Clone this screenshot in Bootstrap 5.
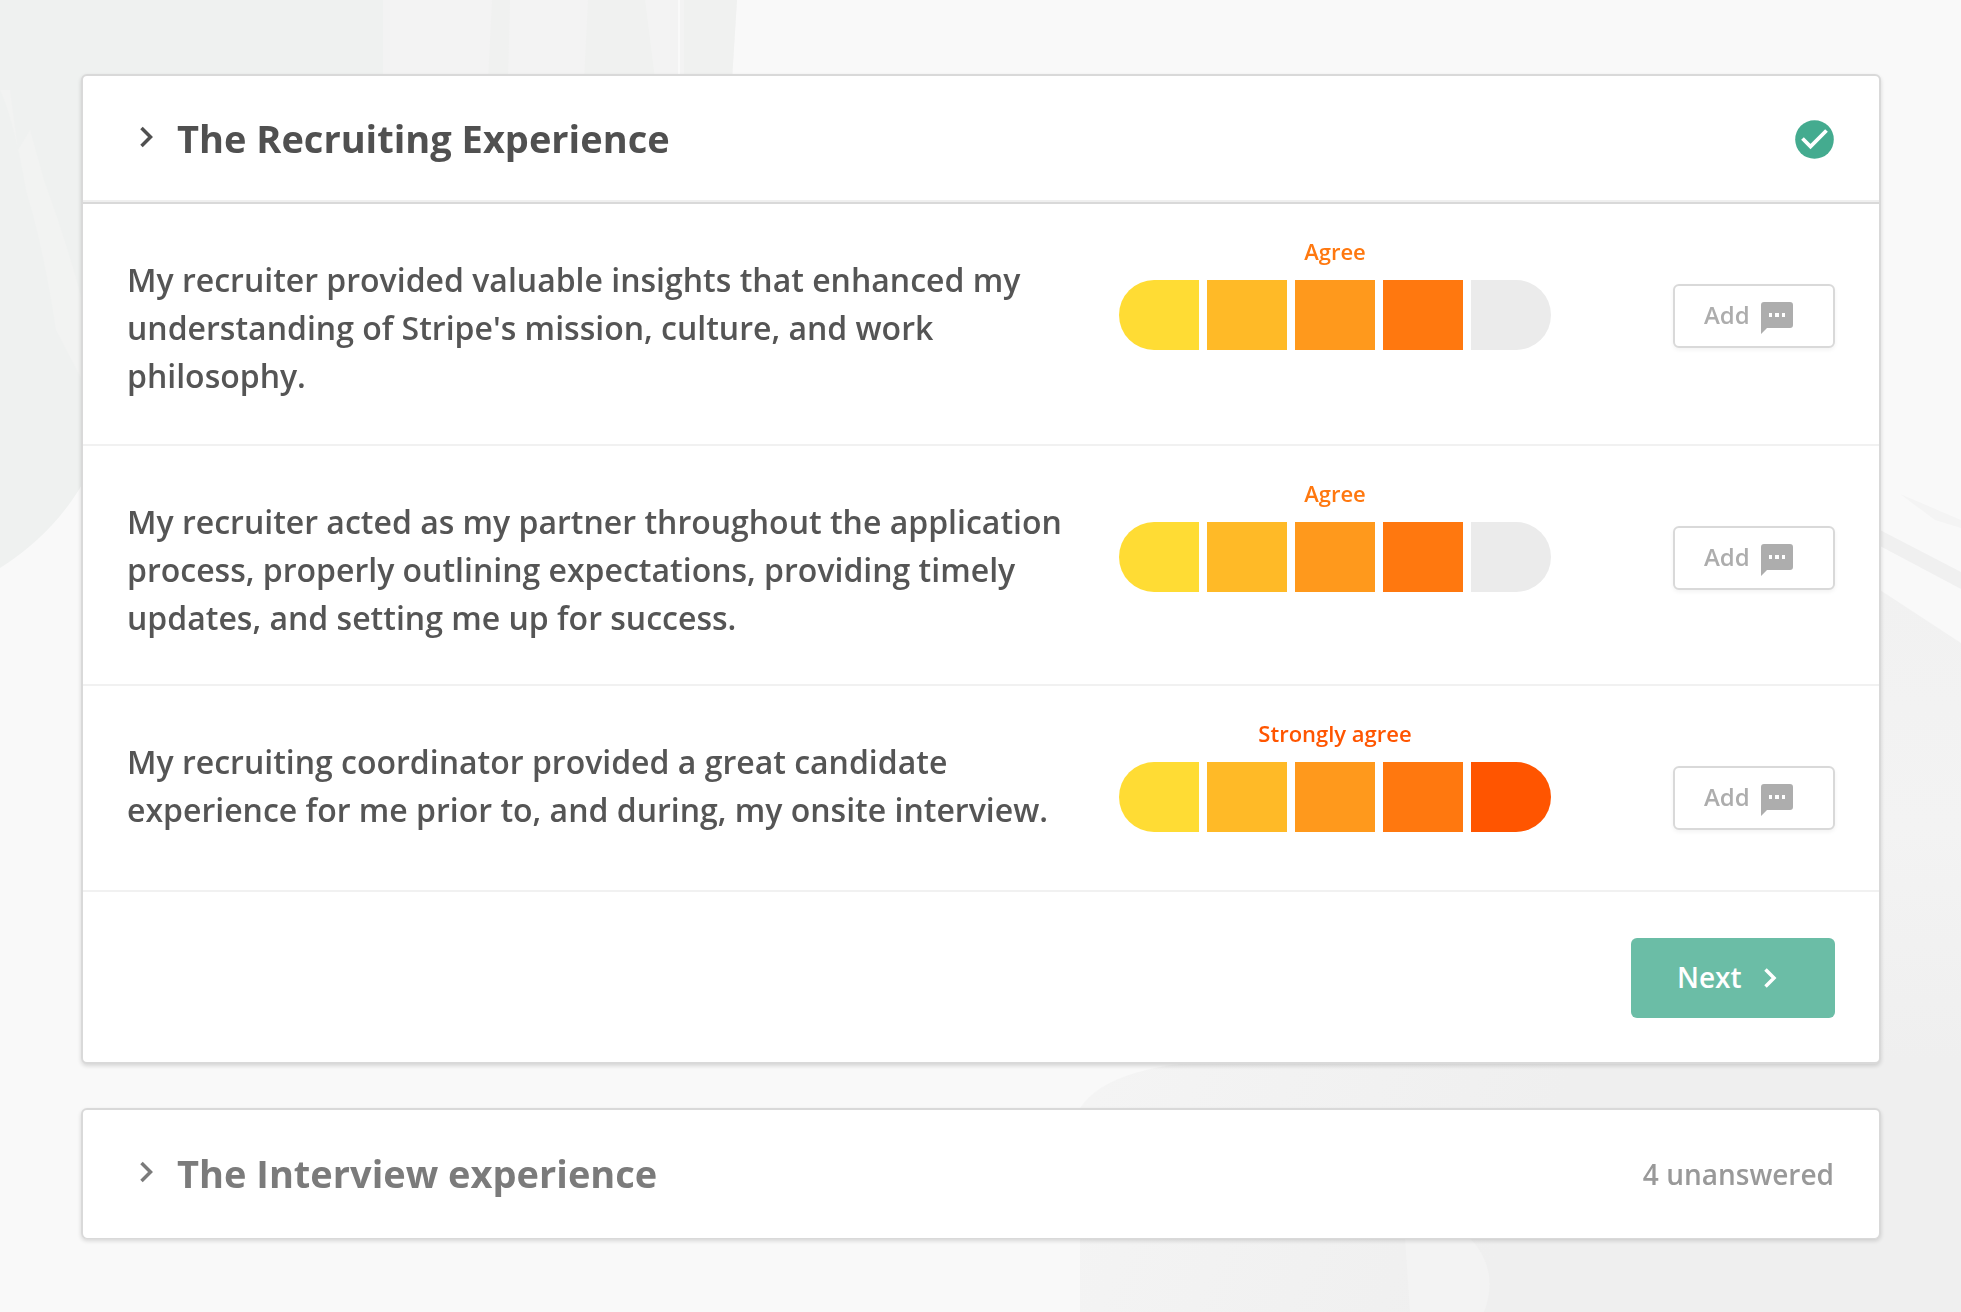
<!DOCTYPE html>
<html lang="en">
<head>
<meta charset="utf-8">
<meta name="viewport" content="width=device-width, initial-scale=1">
<title>Candidate survey</title>
<link rel="stylesheet" href="https://cdn.jsdelivr.net/npm/bootstrap@5.3.0/dist/css/bootstrap.min.css">
<style>
  body { font-family: "Open Sans", "Noto Sans", sans-serif; background: #f9f9f9; color: #545454; min-height: 100vh; }
  .backdrop { position: fixed; inset: 0; width: 100%; height: 100%; z-index: -1; }
  .survey { padding: 74px 80px 72px 81px; gap: 44px; }
  .panel { background: #fff; border: 2px solid #d9d9d9; border-bottom-width: 1px; border-radius: 6px; box-shadow: 0 2px 4px rgba(0, 0, 0, .14); }
  .panel.is-open { border-bottom-width: 2px; }
  .panel-top { padding: 0 45px 0 51px; height: 128px; }
  .panel.is-open .panel-top { border-bottom: 2px solid #d9d9d9; box-shadow: inset 0 -2px #efefef; }
  .panel-toggle { gap: 17px; color: #505050; }
  .panel-toggle.is-muted { color: #7b7b7b; }
  .panel-title { font-size: 38px; line-height: 56px; font-weight: 700; padding-bottom: 2px; }
  .panel-toggle svg { margin-bottom: 4px; }
  .status-text { font-size: 28px; line-height: 40px; font-weight: 600; color: #999; }
  .question { padding: 0 44px; border-bottom: 2px solid #f1f1f1; min-height: 206px; }
  .question-text { font-size: 32px; line-height: 48px; font-weight: 600; color: #555; padding: 52px 12px 42px 0; }
  .panel-top + .question .question-text { padding-bottom: 44px; }
  .rating { width: 432px; padding-top: 31px; }
  .rating-label { font-size: 22px; line-height: 32px; font-weight: 600; margin-bottom: 13px; color: #ff780f; }
  .rating-label.is-top { color: #ff5500; }
  .scale { gap: 8px; }
  .step { appearance: none; width: 80px; height: 70px; margin: 0; background: #ebebeb; cursor: pointer; }
  .step:first-child { border-radius: 35px 0 0 35px; }
  .step:last-child { border-radius: 0 35px 35px 0; }
  .step.on-1 { background: #ffdc34; }
  .step.on-2 { background: #ffba27; }
  .step.on-3 { background: #ff991c; }
  .step.on-4 { background: #ff780f; }
  .step.on-5 { background: #ff5500; }
  .comment { padding: 80px 0 0 122px; }
  .btn-comment { width: 162px; height: 64px; padding: 0 0 2px 29px; gap: 11px; font-size: 24px; line-height: 32px; font-weight: 600; color: #adadad; background: #fff; border: 2px solid #d9d9d9; border-radius: 6px; box-shadow: 0 2px 4px rgba(0, 0, 0, .05); }
  .btn-comment svg { margin-top: 6px; }
  .panel-foot { padding: 46px 44px 44px; }
  .btn-next { width: 204px; height: 80px; padding: 0 0 2px 46px; gap: 22px; font-size: 28px; line-height: 40px; font-weight: 600; color: #fff; background: #6bbda6; border: 0; border-radius: 6px; }
  .btn-next svg { margin-top: 2px; }
  .btn-next:hover { background: #5cb199; color: #fff; }
</style>
<script src="https://cdn.jsdelivr.net/npm/bootstrap@5.3.0/dist/js/bootstrap.bundle.min.js"></script>
</head>
<body>
<svg class="backdrop" viewBox="0 0 1961 1312" preserveAspectRatio="xMidYMid slice" aria-hidden="true">
  <defs>
    <linearGradient id="wash" gradientUnits="userSpaceOnUse" x1="1080" y1="900" x2="1560" y2="1100">
      <stop offset="0" stop-color="#f5f5f5"/><stop offset="1" stop-color="#efefef"/>
    </linearGradient>
    <linearGradient id="side" x1="0" y1="0" x2="0" y2="1">
      <stop offset="0" stop-color="#f1f1f1"/><stop offset=".5" stop-color="#f3f3f3"/><stop offset="1" stop-color="#efefef"/>
    </linearGradient>
  </defs>
  <path d="M0 0H383V74H90V470Q60 530 0 568Z" fill="#eff1f0"/>
  <path d="M0 90Q14 120 26 190Q44 250 56 330L82 380V300Q66 240 44 180L30 130L18 150L10 90Z" fill="#f2f3f2"/>
  <path d="M383 0H737L732 80H383Z" fill="#f3f3f3"/>
  <path d="M492 0H510L508 80H488ZM588 0H645L655 80H584ZM684 0H737L732 80H684Z" fill="#f0f1f0"/>
  <path d="M679 0V80" stroke="#f9f9f9" stroke-width="2"/>
  <path d="M1880 530L1961 572V589L1880 546Z" fill="#f0f0f0"/>
  <path d="M1900 494L1961 520V528L1935 520Z" fill="#f4f4f4"/>
  <path d="M1080 1312V1108Q1110 1062 1240 1060H1961V1312Z" fill="url(#wash)"/>
  <path d="M1880 590L1961 643V1062H1880Z" fill="url(#side)"/>
  <path d="M1405 1238H1470Q1500 1270 1484 1312H1410Z" fill="#f3f3f3"/>
</svg>
<main class="survey d-flex flex-column">
  <section class="panel is-open">
    <header class="panel-top d-flex align-items-center justify-content-between">
      <button type="button" class="panel-toggle btn border-0 p-0 d-flex align-items-center" aria-expanded="true">
        <svg width="26" height="26" viewBox="0 0 26 26" fill="none" stroke="currentColor" stroke-width="3.500" aria-hidden="true"><path d="M7.500 4L16.500 13L7.500 22"/></svg>
        <span class="panel-title">The Recruiting Experience</span>
      </button>
      <svg width="39" height="39" viewBox="0 0 39 39" role="img" aria-label="Complete"><circle cx="19.500" cy="19.500" r="19.300" fill="#44ab8f"/><path d="M7.500 18.500L15.500 26.500L31.500 10.500" fill="none" stroke="#fff" stroke-width="3.800"/></svg>
    </header>
    <div class="question d-flex align-items-start">
      <p class="question-text flex-grow-1 m-0" id="q1">My recruiter provided valuable insights that enhanced my understanding of Stripe's mission, culture, and work philosophy.</p>
      <div class="rating flex-shrink-0" role="radiogroup" aria-labelledby="q1">
        <div class="rating-label text-center">Agree</div>
        <div class="scale d-flex">
          <input class="step on-1" type="radio" name="q1" aria-label="Strongly disagree">
          <input class="step on-2" type="radio" name="q1" aria-label="Disagree">
          <input class="step on-3" type="radio" name="q1" aria-label="Neutral">
          <input class="step on-4" type="radio" name="q1" aria-label="Agree" checked>
          <input class="step" type="radio" name="q1" aria-label="Strongly agree">
        </div>
      </div>
      <div class="comment flex-shrink-0">
        <button type="button" class="btn-comment btn d-flex align-items-center">Add
          <svg width="32" height="32" viewBox="0 0 32 32" aria-hidden="true"><path fill="currentColor" fill-rule="evenodd" d="M3 0H29Q32 0 32 3V23Q32 26 29 26H6L0 32V3Q0 0 3 0ZM8 11V15H11V11ZM14 11V15H18V11ZM21 11V15H24V11Z"/></svg>
        </button>
      </div>
    </div>
    <div class="question d-flex align-items-start">
      <p class="question-text flex-grow-1 m-0" id="q2">My recruiter acted as my partner throughout the application process, properly outlining expectations, providing timely updates, and setting me up for success.</p>
      <div class="rating flex-shrink-0" role="radiogroup" aria-labelledby="q2">
        <div class="rating-label text-center">Agree</div>
        <div class="scale d-flex">
          <input class="step on-1" type="radio" name="q2" aria-label="Strongly disagree">
          <input class="step on-2" type="radio" name="q2" aria-label="Disagree">
          <input class="step on-3" type="radio" name="q2" aria-label="Neutral">
          <input class="step on-4" type="radio" name="q2" aria-label="Agree" checked>
          <input class="step" type="radio" name="q2" aria-label="Strongly agree">
        </div>
      </div>
      <div class="comment flex-shrink-0">
        <button type="button" class="btn-comment btn d-flex align-items-center">Add
          <svg width="32" height="32" viewBox="0 0 32 32" aria-hidden="true"><path fill="currentColor" fill-rule="evenodd" d="M3 0H29Q32 0 32 3V23Q32 26 29 26H6L0 32V3Q0 0 3 0ZM8 11V15H11V11ZM14 11V15H18V11ZM21 11V15H24V11Z"/></svg>
        </button>
      </div>
    </div>
    <div class="question d-flex align-items-start">
      <p class="question-text flex-grow-1 m-0" id="q3">My recruiting coordinator provided a great candidate experience for me prior to, and during, my onsite interview.</p>
      <div class="rating flex-shrink-0" role="radiogroup" aria-labelledby="q3">
        <div class="rating-label is-top text-center">Strongly agree</div>
        <div class="scale d-flex">
          <input class="step on-1" type="radio" name="q3" aria-label="Strongly disagree">
          <input class="step on-2" type="radio" name="q3" aria-label="Disagree">
          <input class="step on-3" type="radio" name="q3" aria-label="Neutral">
          <input class="step on-4" type="radio" name="q3" aria-label="Agree">
          <input class="step on-5" type="radio" name="q3" aria-label="Strongly agree" checked>
        </div>
      </div>
      <div class="comment flex-shrink-0">
        <button type="button" class="btn-comment btn d-flex align-items-center">Add
          <svg width="32" height="32" viewBox="0 0 32 32" aria-hidden="true"><path fill="currentColor" fill-rule="evenodd" d="M3 0H29Q32 0 32 3V23Q32 26 29 26H6L0 32V3Q0 0 3 0ZM8 11V15H11V11ZM14 11V15H18V11ZM21 11V15H24V11Z"/></svg>
        </button>
      </div>
    </div>
    <footer class="panel-foot d-flex justify-content-end">
      <button type="button" class="btn-next btn d-flex align-items-center">Next
        <svg width="13" height="20" viewBox="0 0 13 20" fill="none" stroke="currentColor" stroke-width="3.500" aria-hidden="true"><path d="M1.500 1.500L10 10L1.500 18.500"/></svg>
      </button>
    </footer>
  </section>
  <section class="panel">
    <header class="panel-top d-flex align-items-center justify-content-between">
      <button type="button" class="panel-toggle is-muted btn border-0 p-0 d-flex align-items-center" aria-expanded="false">
        <svg width="26" height="26" viewBox="0 0 26 26" fill="none" stroke="currentColor" stroke-width="3.500" aria-hidden="true"><path d="M7.500 4L16.500 13L7.500 22"/></svg>
        <span class="panel-title">The Interview experience</span>
      </button>
      <span class="status-text">4 unanswered</span>
    </header>
  </section>
</main>
</body>
</html>
